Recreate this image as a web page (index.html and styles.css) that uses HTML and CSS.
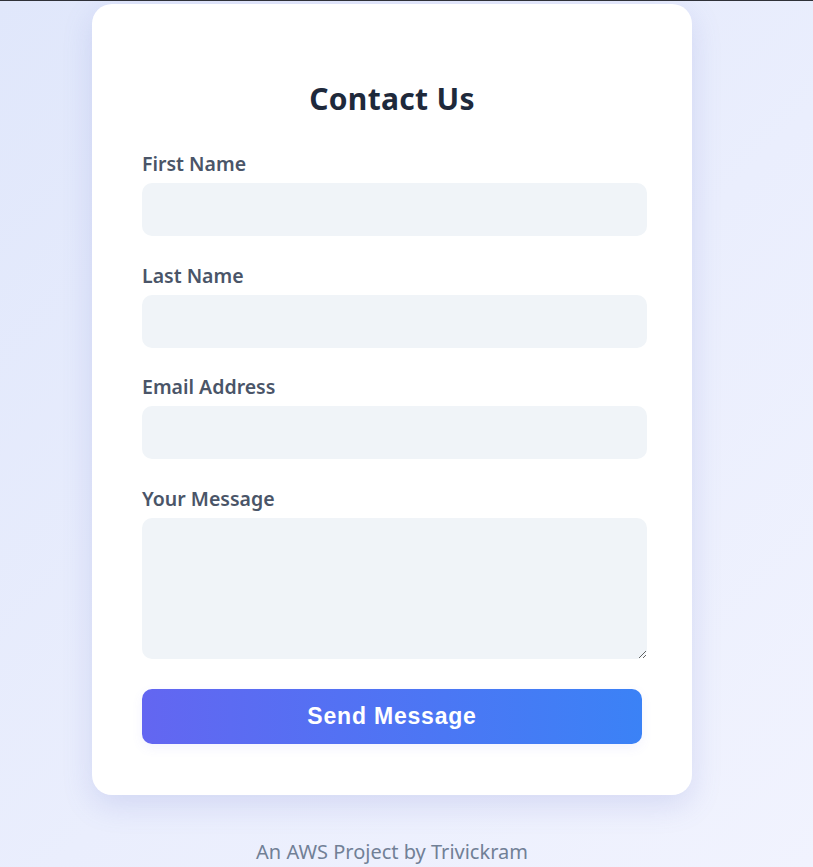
FILE: index.html
```html
<!DOCTYPE html>
<html lang="en">
<head>
<meta charset="utf-8">
<title>Contact Us</title>
<link rel="stylesheet" href="styles.css">
</head>
<body>
<div class="page">
  <div class="card">
    <h2 class="title">Contact Us</h2>
    <form class="form">
      <div class="group">
        <label class="label" for="fn">First Name</label>
        <input class="field" id="fn" type="text">
      </div>
      <div class="group">
        <label class="label" for="ln">Last Name</label>
        <input class="field" id="ln" type="text">
      </div>
      <div class="group">
        <label class="label" for="em">Email Address</label>
        <input class="field" id="em" type="email">
      </div>
      <div class="group">
        <label class="label" for="msg">Your Message</label>
        <textarea class="field area" id="msg"></textarea>
      </div>
      <button class="btn" type="button">Send Message</button>
    </form>
  </div>
  <p class="footer">An AWS Project by Trivickram</p>
</div>
</body>
</html>
```
FILE: styles.css
```css
html, body {
  margin: 0;
  padding: 0;
  height: 100%;
  overflow: hidden;
}
body {
  border-top: 1px solid #2f3138;
  background: linear-gradient(135deg, #e0e7fb 0%, #eaeefd 55%, #f1f3fe 100%);
  font-family: "Noto Sans", "Open Sans", sans-serif;
  box-sizing: border-box;
}
.page {
  width: 784px;
  display: flex;
  flex-direction: column;
  align-items: center;
  padding-top: 3px;
}
.card {
  width: 600px;
  box-sizing: border-box;
  background: #ffffff;
  border-radius: 20px;
  padding: 50px 50px 51px 50px;
  box-shadow: 0 10px 30px rgba(99, 110, 200, 0.18);
}
.title {
  margin: 27px 0 35px 0;
  text-align: center;
  font-size: 30px;
  font-weight: 700;
  color: #1e293b;
  line-height: 36px;
  letter-spacing: 0.3px;
}
.form {
  display: flex;
  flex-direction: column;
}
.group {
  display: flex;
  flex-direction: column;
  margin-bottom: 27.67px;
}
.label {
  font-size: 19.5px;
  font-weight: 600;
  color: #4a5568;
  line-height: 23px;
  margin-bottom: 8px;
}
.field {
  width: 505px;
  height: 53px;
  box-sizing: border-box;
  border: none;
  border-radius: 10px;
  background: #f0f4f8;
  font-family: inherit;
  font-size: 16px;
  padding: 0 14px;
  outline: none;
}
.area {
  height: 141px;
  padding: 12px 14px;
  resize: vertical;
}
.btn {
  width: 500px;
  height: 55px;
  margin-top: 2.33px;
  border: none;
  border-radius: 10px;
  background: linear-gradient(90deg, #6366f1 0%, #3b82f6 100%);
  color: #ffffff;
  font-family: "Liberation Sans", Arial, sans-serif;
  font-weight: 700;
  font-size: 23px;
  letter-spacing: 0.8px;
  box-shadow: 0 4px 12px rgba(99, 102, 241, 0.08);
  cursor: pointer;
}
.footer {
  margin: 44px 0 0 0;
  font-size: 20px;
  color: #718096;
  line-height: 26px;
}
```
